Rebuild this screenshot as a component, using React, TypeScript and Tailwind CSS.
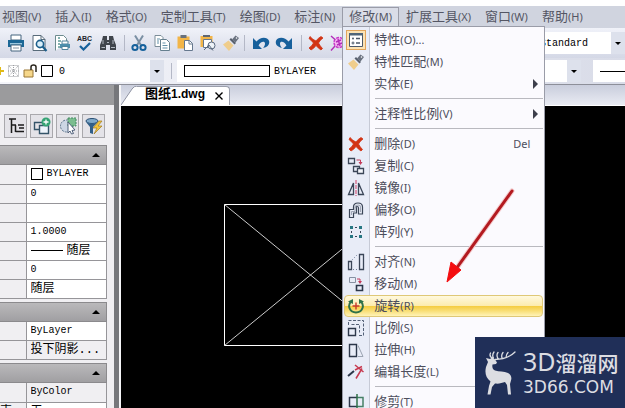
import type { ReactNode } from 'react'

const uiFont = "font-['Noto_Sans','Noto_Sans_CJK_SC',sans-serif]"
const gridFont = "font-['Liberation_Mono','Noto_Sans_CJK_SC',monospace]"

/** Small drawing on an 18px grid, shared by the toolbars and the menu. */
function Glyph({ children }: { children?: ReactNode }) {
  return (
    <svg viewBox="0 0 18 18" className="block size-[18px] shrink-0" fill="none" aria-hidden="true">
      {children}
    </svg>
  )
}

const glyphs = {
  clip: <path d="M0 6h9v5H0zM0 11h7v3H0z" fill="#66707c" />,
  printer: (
    <>
      <path d="M4 1h10v5H4z" fill="#fff" stroke="#45647e" />
      <path d="M1 6h16v7H1z" fill="#1b6796" />
      <path d="M3 9h12v1.5H3z" fill="#9cc8df" />
      <path d="M4 11h10v6H4z" fill="#fff" stroke="#45647e" />
      <path d="M6 14h6" stroke="#8292a0" />
    </>
  ),
  preview: (
    <>
      <path d="M3 1.5h8l4 4v11H3z" fill="#fff" stroke="#586b7a" />
      <path d="M11 1.5v4h4" stroke="#586b7a" />
      <circle cx="10" cy="10" r="3.6" fill="#d9effa" stroke="#1d5f8c" strokeWidth="1.6" />
      <path d="M12.6 12.6 16.500 17" stroke="#1d5f8c" strokeWidth="2.2" />
    </>
  ),
  publish: (
    <>
      <path d="M2.500 16.500V1.500h8l3 3v4" fill="#fff" stroke="#6d8b8f" />
      <path d="M5 4h2M5 7h3M5 10h2M5 13h2" stroke="#5f9a98" strokeWidth="1.500" />
      <path d="M9 7h6v3H9z" fill="#fff" stroke="#51839c" />
      <path d="M7 10h10v4H7z" fill="#4c8eac" />
      <path d="M9 12.500h6v3H9z" fill="#fff" stroke="#51839c" />
    </>
  ),
  binoculars: (
    <>
      <path d="M4 2h4v4h2V2h4l1 4 2 5v5h-6v-5H7v5H1v-5l2-5z" fill="#40454c" />
      <path d="M4 6v4M14 6v4M2.500 13.500H6M12 13.500h4M8 8.500h2" stroke="#b3bac2" />
    </>
  ),
  scissors: (
    <>
      <path d="M5 1.500 11.500 12M13 1.500 6.500 12" stroke="#7a8fa3" strokeWidth="2" />
      <circle cx="5" cy="13.500" r="2.600" stroke="#15619c" strokeWidth="2" />
      <circle cx="13" cy="13.500" r="2.600" stroke="#15619c" strokeWidth="2" />
    </>
  ),
  copyDoc: (
    <>
      <path d="M2 1.500h6l2 2v9H2z" fill="#fff" stroke="#7b8d99" />
      <path d="M7.500 5.500h6l3 3v8h-9z" fill="#fff" stroke="#66808f" />
      <path d="M4 5h3M4 7h2M4 9h2M9.500 9h3M9.500 11.500h5M9.500 14h5" stroke="#6391a9" />
    </>
  ),
  paste: (
    <>
      <path d="M1.500 2.500h12v12h-12z" fill="#f2b548" />
      <path d="M4.500 1h6v3h-6z" fill="#68717d" />
      <path d="M8.500 6.500h5l3 3v7h-8z" fill="#fff" stroke="#66788e" />
      <path d="M13 6.500V10h3.500" stroke="#66788e" />
    </>
  ),
  pasteAs: (
    <>
      <path d="M1.500 2h12v11h-12z" fill="#f2b548" />
      <path d="M4 1h7v2H4z" fill="#5e6673" />
      <path d="M4.500 5.500h8v8h-8z" fill="#fff" stroke="#66788e" />
      <circle cx="12.500" cy="11.500" r="3.500" fill="#eef3f8" stroke="#58677c" />
      <path d="m5 16 5-5 4 5.500" stroke="#58677c" />
    </>
  ),
  brush: (
    <>
      <path d="M1 10.500 6.500 6.500l5 5L7 17z" fill="#efcd8c" />
      <path d="m7.500 5.500 1.500-1.500 5 5-1.500 1.500z" fill="#59616e" />
      <path d="m10 5.500 3.500-4 3.500 2.500-3.500 4.500z" fill="#69717f" />
      <circle cx="14.500" cy="4" r=".8" fill="#fff" />
    </>
  ),
  undo: <path d="M1 4v11h9l-3.400-3.400C8 7.500 13 6.500 13 9.500c0 1.500-.6 3-2 4.500 5-1 7-4 6-7.200-1.500-4.300-9-4.300-12.500.7z" fill="#17609c" />,
  redo: <path d="M17 4v11H8l3.400-3.400C10 7.500 5 6.500 5 9.500c0 1.500.6 3 2 4.500-5-1-7-4-6-7.200 1.500-4.300 9-4.300 12.500.7z" fill="#17609c" />,
  erase: <path d="M3 2.500Q6 6 9 7q2-3 5-4.500L16 4q-3 2-4.500 5Q13 12 15.500 14.500L14 16q-3-2-5-4.500Q7 14.500 4 16l-2-2q3.500-2.500 4.500-5Q4 6 2 4.500z" fill="#d23414" stroke="#d23414" strokeWidth=".8" />,
  magenta: (
    <>
      <circle cx="9" cy="8.500" r="5" fill="#f6b4f2" stroke="#c63cc9" strokeWidth="1.500" strokeDasharray="3 1" />
      <path d="M1 2l4 3.500M1 16.500l4-4.500M6 8l5-2M7 11l5-2M8 5l2 7" stroke="#b22cba" strokeWidth="1.400" />
    </>
  ),
  props: (
    <>
      <path d="M2.500 2.500h13v13h-13z" fill="#fff" stroke="#4c5868" />
      <path d="M2 2h14v2.500H2z" fill="#4f6579" />
      <path d="M9 7.500h4M9 12h4" stroke="#4c5868" strokeWidth="1.500" />
      <circle cx="6" cy="7.500" r="1" fill="#4c5868" />
      <circle cx="6" cy="12" r="1" stroke="#4c5868" />
    </>
  ),
  copy: (
    <>
      <path d="M1.500 1.500h6v5h-6zM6.500 9.500h6v5h-6z" stroke="#3b4658" strokeWidth="1.300" />
      <path d="M10.500 11.500h6v5h-6z" fill="#f4f6fb" stroke="#3b4658" strokeWidth="1.300" />
      <path d="M9.500 3h4v3" stroke="#c23b5a" />
      <path d="M11.500 5h4l-2 3z" fill="#c23b5a" />
    </>
  ),
  mirror: (
    <>
      <path d="M6.500 4v11.500h-5zM11.500 4v11.500h5z" stroke="#3b4658" strokeWidth="1.300" />
      <path d="M9 1v16" stroke="#cf4168" strokeDasharray="4 1" />
    </>
  ),
  offset: (
    <>
      <path d="M2.500 16.500v-8h4V6q0-4 4.500-4t4.500 4v7h-4V7q0-1.500-1.500-1.500T9.500 7v5h-3v4.500z" stroke="#3b4658" strokeWidth="1.200" />
      <path d="M4.500 14v-3.500h3.500V6q0-2 3-2t2.500 2v5" stroke="#8b94a5" strokeWidth=".8" />
    </>
  ),
  array: (
    <g fill="#267783">
      <path d="M3 3h3v3H3zM12 3h3v3h-3zM3 12h3v3H3zM12 12h3v3h-3z" />
      <path d="M4 8h1v2H4zM13 8h1v2h-1zM8 4h2v1H8zM8 13h2v1H8z" fill="#3b4658" />
    </g>
  ),
  align: (
    <>
      <path d="M1.500 8.500h3v8h-3zM12.500 1.500h4v15h-4z" stroke="#3b4658" strokeWidth="1.300" />
      <path d="m5 7 6-6M6 16.500h5" stroke="#71809a" strokeDasharray="1 2" />
    </>
  ),
  move: (
    <>
      <path d="M2.500 2.500h6v5h-6z" stroke="#8791a2" />
      <path d="M9.500 10.500h6v5h-6z" stroke="#2c374a" strokeWidth="1.600" />
      <path d="M10 4h3v3" stroke="#c23b5a" />
      <path d="M11 6h4l-2 3z" fill="#c23b5a" />
    </>
  ),
  rotate: (
    <>
      <path d="M4 4.500C0 9 3 15.500 9 15.500S18 9 14 4.500" stroke="#2f7148" strokeWidth="2" />
      <path d="M1 4.500 6 2v5zM17 4.500 12 2v5z" fill="#2f7148" />
      <path d="M9 5.500v7M5.500 9h7" stroke="#c8382a" strokeWidth="1.400" />
    </>
  ),
  scale: (
    <>
      <path d="M1.500 6V1.500h15v15H12M4.500 5.500h8v8" stroke="#536076" strokeDasharray="3 1.500" />
      <path d="M1.500 9.500h7v7h-7z" stroke="#2c374a" strokeWidth="1.400" />
    </>
  ),
  stretch: (
    <>
      <path d="M2.500 3.500h7v12h-7z" stroke="#2c374a" strokeWidth="1.400" />
      <path d="m11 4.500 5 11h-5" stroke="#9ba4b2" />
    </>
  ),
  lengthen: (
    <>
      <path d="m1 13 6-5" stroke="#2c374a" strokeWidth="2" />
      <path d="m8 7 7-3.500M8 2l8.500 7M9 15.500l6-10" stroke="#c73a50" strokeWidth="1.500" />
    </>
  ),
  trim: (
    <>
      <path d="M10 4.500H2.500v9H10" stroke="#2c374a" strokeWidth="1.500" />
      <path d="M10 4.500h6v9h-6" stroke="#468067" strokeWidth="1.500" />
      <path d="M10 1v16" stroke="#2f7148" strokeWidth="1.500" />
    </>
  ),
  tree: (
    <>
      <path d="M2 2h7M4.500 2v14M4.500 8H9M8.500 8v7M8.500 14.500H12" stroke="#1b1b1b" strokeWidth="1.500" />
      <path d="M11 8h6M12 11h5M12 14.500h5" stroke="#1b1b1b" strokeWidth="1.500" />
    </>
  ),
  addSet: (
    <>
      <path d="M1.500 5.500h9v7h-9z" stroke="#345469" strokeWidth="1.400" />
      <path d="M6.500 8.500h9v8h-9z" fill="#eef4fb" stroke="#345469" strokeWidth="1.400" />
      <circle cx="13" cy="5" r="4.500" fill="#35a374" />
      <path d="M13 2.500v5M10.500 5h5" stroke="#fff" strokeWidth="1.300" />
    </>
  ),
  pick: (
    <>
      <circle cx="7.500" cy="9" r="6" fill="#ccd6e4" stroke="#5a748b" strokeDasharray="2 1" />
      <path d="M9 1h8v8H9z" fill="#7bbd8f" stroke="#438a61" strokeDasharray="2 1" />
      <path d="m9 5 7 8-3 .5 1.500 3-2 .5-1.500-3-2 2z" fill="#fff" stroke="#50617b" />
    </>
  ),
  filter: (
    <>
      <ellipse cx="7" cy="4" rx="6" ry="2.500" fill="#7fa9c9" stroke="#284d73" />
      <path d="m1 5 4 5v6l3 1v-7l5-5q-6 3-12 0" fill="#315f89" />
      <path d="m14 4-6 7h4l-3 6 8-8h-4l4-5z" fill="#f4c338" stroke="#9e7c27" strokeWidth=".7" />
    </>
  ),
}

type GlyphName = keyof typeof glyphs

function Label({ text, mnemonic, tail }: { text: string; mnemonic: string; tail?: string }) {
  return (
    <span className={`${uiFont} inline-block whitespace-nowrap pb-0.5 text-[13px] leading-[18px]`}>
      {text}
      <span className="text-[11px]">({mnemonic}){tail}</span>
    </span>
  )
}

const menus = [
  ['视图', 'V'],
  ['插入', 'I'],
  ['格式', 'O'],
  ['定制工具', 'T'],
  ['绘图', 'D'],
  ['标注', 'N'],
  ['修改', 'M'],
  ['扩展工具', 'X'],
  ['窗口', 'W'],
  ['帮助', 'H'],
]

type Entry = {
  text: string
  key: string
  icon?: GlyphName
  tail?: string
  sub?: boolean
  shortcut?: string
  boxed?: boolean
  active?: boolean
}

const modifyMenu: Entry[][] = [
  [
    { text: '特性', key: 'O', icon: 'props', tail: '...', boxed: true },
    { text: '特性匹配', key: 'M', icon: 'brush' },
    { text: '实体', key: 'E', sub: true },
  ],
  [{ text: '注释性比例', key: 'V', sub: true }],
  [
    { text: '删除', key: 'D', icon: 'erase', shortcut: 'Del' },
    { text: '复制', key: 'C', icon: 'copy' },
    { text: '镜像', key: 'I', icon: 'mirror' },
    { text: '偏移', key: 'O', icon: 'offset' },
    { text: '阵列', key: 'Y', icon: 'array' },
  ],
  [
    { text: '对齐', key: 'N', icon: 'align' },
    { text: '移动', key: 'M', icon: 'move' },
    { text: '旋转', key: 'R', icon: 'rotate', active: true },
    { text: '比例', key: 'S', icon: 'scale' },
    { text: '拉伸', key: 'H', icon: 'stretch' },
    { text: '编辑长度', key: 'L', icon: 'lengthen' },
  ],
  [{ text: '修剪', key: 'T', icon: 'trim' }],
]

function MenuRow({ entry }: { entry: Entry }) {
  return (
    <button
      role="menuitem"
      className={`flex h-[22px] w-full items-center border pl-px text-left ${
        entry.active
          ? 'rounded-sm border-[#dfc877] bg-[linear-gradient(#fff9df,#fcecae_48%,#f5cd42_52%,#f9df78_75%,#fff3b8)]'
          : 'border-transparent'
      }`}
    >
      <span
        className={`flex size-5 shrink-0 items-center justify-center ${
          entry.boxed ? 'border border-[#e2a55b] bg-[#fbe3b5]' : ''
        }`}
      >
        <Glyph>{entry.icon && glyphs[entry.icon]}</Glyph>
      </span>
      <span className="ml-2 flex grow">
        <Label text={entry.text} mnemonic={entry.key} tail={entry.tail} />
      </span>
      {entry.shortcut && <span className={`${uiFont} mr-3 text-[11px] leading-4`}>{entry.shortcut}</span>}
      {entry.sub && (
        <svg viewBox="0 0 5 10" className="mr-1 h-[10px] w-[5px]" aria-hidden="true">
          <path d="M0 0v10l5-5z" fill="#3d3f4c" />
        </svg>
      )}
    </button>
  )
}

function ModifyMenu() {
  return (
    <div
      role="menu"
      className="absolute left-0 top-full z-10 -mt-0.5 w-[203px] border border-[#9a9ca8] bg-[linear-gradient(to_right,#e8ecf7_26px,#c6cad6_26px,#c6cad6_27px,#fbfafe_27px)] px-px py-0.5 text-[#4d4e5c]"
    >
      {modifyMenu.map((group, i) => (
        <div key={i}>
          {i > 0 && <hr className="my-[3px] ml-[31px] h-0.5 border-0 border-t border-[#b9b9bf]" />}
          {group.map((entry) => (
            <MenuRow key={entry.text} entry={entry} />
          ))}
        </div>
      ))}
    </div>
  )
}

function MenuBar() {
  return (
    <nav className="flex h-[22px] shrink-0 bg-[#d0d4df] pt-px text-[#545664]">
      <div className="-ml-[5px] flex">
        {menus.map(([text, key]) => (
          <div key={key} className="relative">
            <button
              className={`flex h-5 items-center border px-1.5 ${
                text === '修改' ? 'border-[#9a9ca8] border-b-transparent bg-[#dadde7]' : 'border-transparent'
              }`}
            >
              <Label text={text} mnemonic={key} />
            </button>
            {text === '修改' && <ModifyMenu />}
          </div>
        ))}
      </div>
    </nav>
  )
}

function DropArrow() {
  return (
    <span className="pointer-events-none flex w-[14px] shrink-0 items-center justify-center self-stretch bg-[#dde1ec]">
      <svg viewBox="0 0 6 3" className="h-[3px] w-[6px]" aria-hidden="true">
        <path d="M0 0h6L3 3z" fill="#000" />
      </svg>
    </span>
  )
}

function Combo({ label, value, className, children }: { label: string; value: string; className: string; children?: ReactNode }) {
  return (
    <div className={`flex h-[22px] items-center bg-white ${className}`}>
      {children}
      <select aria-label={label} className={`${gridFont} min-w-0 grow appearance-none text-[10px] text-black`}>
        <option>{value}</option>
      </select>
      <DropArrow />
    </div>
  )
}

function Divider() {
  return <span className="mx-0.5 h-4 w-px shrink-0 bg-[#b4b8c6]" />
}

function Tool({ name, label }: { name: GlyphName; label: string }) {
  return (
    <button aria-label={label} className="flex h-6 w-[23px] shrink-0 items-center justify-center">
      <Glyph>{glyphs[name]}</Glyph>
    </button>
  )
}

function StandardToolbar() {
  return (
    <div className="flex h-[30px] shrink-0 items-center bg-linear-to-b from-[#f0f2f9] to-[#d4d8e6]">
      <div className="-ml-[19px] flex shrink-0 items-center">
        <Tool name="clip" label="保存" />
        <Tool name="printer" label="打印" />
        <Tool name="preview" label="打印预览" />
        <Tool name="publish" label="发布" />
        <button aria-label="拼写检查" className="flex h-6 w-[23px] flex-col items-center justify-center">
          <span className="font-['Liberation_Sans',sans-serif] text-[7px] font-bold leading-[7px] text-[#22262e]">ABC</span>
          <svg viewBox="0 0 12 9" className="h-[9px] w-3" aria-hidden="true">
            <path d="m1 4 3.500 3.500L11 1" fill="none" stroke="#16619b" strokeWidth="2.200" />
          </svg>
        </button>
        <Tool name="binoculars" label="查找" />
        <span className="w-[3px]" />
        <Divider />
        <Tool name="scissors" label="剪切" />
        <Tool name="copyDoc" label="复制" />
        <Tool name="paste" label="粘贴" />
        <Tool name="pasteAs" label="选择性粘贴" />
        <Tool name="brush" label="特性匹配" />
        <Divider />
        <span className="w-0.5" />
        <Tool name="undo" label="放弃" />
        <Tool name="redo" label="重做" />
        <span className="w-1" />
        <Divider />
        <Tool name="erase" label="删除" />
        <Tool name="magenta" label="分解" />
      </div>
      <Combo label="文字样式" value="Standard" className="ml-auto w-[85px] shrink-0" />
    </div>
  )
}

function LayerToolbar() {
  return (
    <div className="flex h-[26px] shrink-0 items-center bg-linear-to-r from-[#f4f5fa] to-[#d9dce8]">
      <Combo label="图层" value="0" className="w-[164px] shrink-0">
        <svg viewBox="0 0 56 16" className="mr-[3px] h-4 w-14 shrink-0" fill="none" aria-hidden="true">
          <path d="M0 4h1v3h3v2H1v3H0z" fill="#e0ba17" />
          <path d="M8.500 2.500h10v11h-10zM9 3l9 10M18 3l-9 10M13.500 2v12M8 8h11" stroke="#9a9ca0" strokeDasharray="1 1" />
          <path d="M24 7h9v7h-9z" fill="#f6d78a" stroke="#9a7635" />
          <path d="M31 7V4q0-2 2.500-2T36 4v5" stroke="#29241c" strokeWidth="1.500" />
          <path d="M41.500 2.500h11v11h-11z" fill="#fff" stroke="#000" />
        </svg>
      </Combo>
      <span className="ml-[7px] mr-[5px] h-4 w-px shrink-0 bg-[#b4b8c6]" />
      <Combo label="颜色" value="BYLAYER" className="mr-3 grow pl-[7px]">
        <span className="mr-1 h-3 w-[86px] shrink-0 border border-black" />
      </Combo>
      <div className="flex h-[22px] w-8 shrink-0 items-center bg-white pl-[7px]">
        <span className="h-px grow bg-black" />
      </div>
    </div>
  )
}

function GroupHeader() {
  return (
    <button
      aria-label="折叠"
      className="flex h-5 w-full items-center justify-end border border-l-0 border-[#8b8a8d] bg-linear-to-b from-[#bab9bb] to-[#a09fa2] pr-1.5"
    >
      <svg viewBox="0 0 8 4" className="h-1 w-2" aria-hidden="true">
        <path d="M0 4h8L4 0z" fill="#000" />
      </svg>
    </button>
  )
}

type Property = { label: string; value: string; caption?: string; mark?: 'swatch' | 'line'; muted?: boolean }

const propertyGroups: Property[][] = [
  [
    { label: '颜色', value: 'BYLAYER', mark: 'swatch' },
    { label: '图层', value: '0' },
    { label: '线型', value: '' },
    { label: '线型比例', value: '1.0000' },
    { label: '线宽', value: '随层', mark: 'line' },
    { label: '厚度', value: '0' },
    { label: '打印样式', value: '随层' },
  ],
  [
    { label: '材质', value: 'ByLayer' },
    { label: '阴影显示', value: '投下阴影...', muted: true },
  ],
  [
    { label: '打印颜色', value: 'ByColor', muted: true },
    { label: '约束', value: '无', caption: '束' },
  ],
]

function PropertyGroup({ rows }: { rows: Property[] }) {
  return (
    <section className="mb-[3px]">
      <GroupHeader />
      <table className="w-full table-fixed border-collapse">
        <tbody>
          {rows.map((row) => (
            <tr key={row.label} className="h-[19px] border-b border-[#969599]">
              <th className={`${gridFont} w-[26px] border-r border-[#969599] p-0 text-left text-[12px] font-normal leading-[18px]`}>
                {row.caption}
              </th>
              <td className={`border-r border-[#969599] p-0 pl-1 ${row.muted ? 'bg-[#f0eff2]' : 'bg-white'}`}>
                <div className="flex h-[18px] items-center">
                  {row.mark === 'swatch' && <span className="mr-1 size-3 shrink-0 border border-black" />}
                  {row.mark === 'line' && <span className="mr-1 h-px w-8 shrink-0 bg-black" />}
                  <input
                    aria-label={row.label}
                    defaultValue={row.value}
                    className={`${gridFont} h-[18px] w-full min-w-0 leading-[18px] text-black ${
                      /[\u4e00-\u9fff]/.test(row.value) ? 'text-[12px]' : 'text-[10px]'
                    }`}
                  />
                </div>
              </td>
            </tr>
          ))}
        </tbody>
      </table>
    </section>
  )
}

const paletteTools: [GlyphName, string][] = [
  ['tree', '列表'],
  ['addSet', '添加到选择集'],
  ['pick', '选择对象'],
  ['filter', '快速选择'],
]

function PropertiesPanel() {
  return (
    <aside className="flex w-[121px] shrink-0 flex-col overflow-hidden border-r-2 border-[#f5f5f7] bg-[#f0eff2]">
      <div className="flex min-h-0 grow flex-col border-r-[5px] border-[#76777b]">
        <div className="h-5 shrink-0 bg-[#9b9b9d]" />
        <div className="flex gap-[3px] pb-[7px] pl-1 pt-[9px]">
          {paletteTools.map(([name, label]) => (
            <button
              key={name}
              aria-label={label}
              className="flex h-6 w-[23px] items-center justify-center border border-[#a9a8ac] bg-[#e4e3e8]"
            >
              <Glyph>{glyphs[name]}</Glyph>
            </button>
          ))}
        </div>
        <div className="mr-[7px]">
          {propertyGroups.map((rows, i) => (
            <PropertyGroup key={i} rows={rows} />
          ))}
        </div>
      </div>
    </aside>
  )
}

function Drawing() {
  return (
    <main className="flex min-w-0 grow flex-col">
      <div className="flex h-[21px] shrink-0 items-end border-b border-white bg-linear-to-b from-[#c9cddc] to-[#e9ebf3]">
        <svg viewBox="0 0 16 19" className="h-[19px] w-4" aria-hidden="true">
          <path d="M0 19 11 3q2-3 5-3v19z" fill="#fff" />
          <path d="M0 19 11 3q2-3 5-3" fill="none" stroke="#8f93a3" />
        </svg>
        <div className="flex h-[19px] items-center gap-2 rounded-tr-sm border-r border-t border-[#9a9eab] bg-white pl-2 pr-1">
          <span className="whitespace-nowrap pb-1 font-['Liberation_Sans','Noto_Sans_CJK_SC',sans-serif] text-[13px] font-bold leading-4">
            图纸<span className="text-[12px]">1.dwg</span>
          </span>
          <button aria-label="关闭" className="flex size-3 items-center justify-center">
            <svg viewBox="0 0 8 8" className="size-2" aria-hidden="true">
              <path d="m.5.500 7 7m0-7-7 7" stroke="#000" strokeWidth="1.400" />
            </svg>
          </button>
        </div>
      </div>
      <div className="min-h-0 grow overflow-hidden bg-black">
        <svg viewBox="0 0 504 302" className="block h-[302px] w-[504px]" fill="none" stroke="#fff" aria-hidden="true">
          <path d="M103.500 98.500h172v141h-172z" />
          <path d="m103.500 98.500 172 141m0-141-172 141" strokeWidth=".8" />
        </svg>
      </div>
    </main>
  )
}

function Pointer() {
  return (
    <svg
      viewBox="0 0 72 96"
      className="pointer-events-none absolute left-[444px] top-[188px] z-20 h-24 w-[72px]"
      aria-hidden="true"
    >
      <path d="M68 3 12 81" stroke="#f4c9cb" strokeWidth="5" strokeLinecap="round" />
      <path d="M68 3 12 81" stroke="#b31a20" strokeWidth="3" strokeLinecap="round" />
      <path d="m3 94 4-20 10 8z" fill="#f40d10" stroke="#f40d10" />
    </svg>
  )
}

function Watermark() {
  return (
    <div className="absolute bottom-0 right-0 z-20 flex h-[71px] w-[150px] items-center bg-[#202f58] pl-2 text-[#dcdde2]">
      <svg viewBox="0 0 34 46" className="h-[46px] w-[34px] shrink-0" fill="currentColor" aria-hidden="true">
        <path d="M3 8l4 1 2-1.500 3 2 2 3-1 1.500-3.500.5C9 17 9.500 19.500 12 20.500c4 1.500 9 .5 13 2.500 3 1.500 4 4.500 3 7.500L27 34l1 10.500h-3L24 35l-2-3c-3 1-6 2-10 1.500L9 37l-1.500 7.500h-3L6 36l1.500-4.500C3 28 1.500 23 3 17l2-5z" />
        <path
          d="M10 8.500C7 7 6.500 5 7.500 3M10.500 8C9 5.500 9.500 4 11 2M12 9.500C20 9.500 26 8 32 2M15 8.500Q13 5 15 2.500M19 8q-1-3 1-5.500M23 7.500q0-3 2-5"
          fill="none"
          stroke="currentColor"
          strokeWidth="1.300"
          strokeLinecap="round"
        />
      </svg>
      <div className="ml-1.5 whitespace-nowrap pb-px">
        <div className="font-['Noto_Sans','Noto_Sans_CJK_SC',sans-serif] text-[25px] leading-7">
          3D<span className="text-[21px] font-medium">溜溜网</span>
        </div>
        <div className="font-['DejaVu_Sans',sans-serif] text-[17px] leading-5">3D66.COM</div>
      </div>
    </div>
  )
}

export default function App() {
  return (
    <div className="relative flex h-screen flex-col overflow-hidden bg-white pt-1.5">
      <MenuBar />
      <StandardToolbar />
      <LayerToolbar />
      <div className="flex min-h-0 grow border-t border-[#8d8f99]">
        <PropertiesPanel />
        <Drawing />
      </div>
      <Pointer />
      <Watermark />
    </div>
  )
}
